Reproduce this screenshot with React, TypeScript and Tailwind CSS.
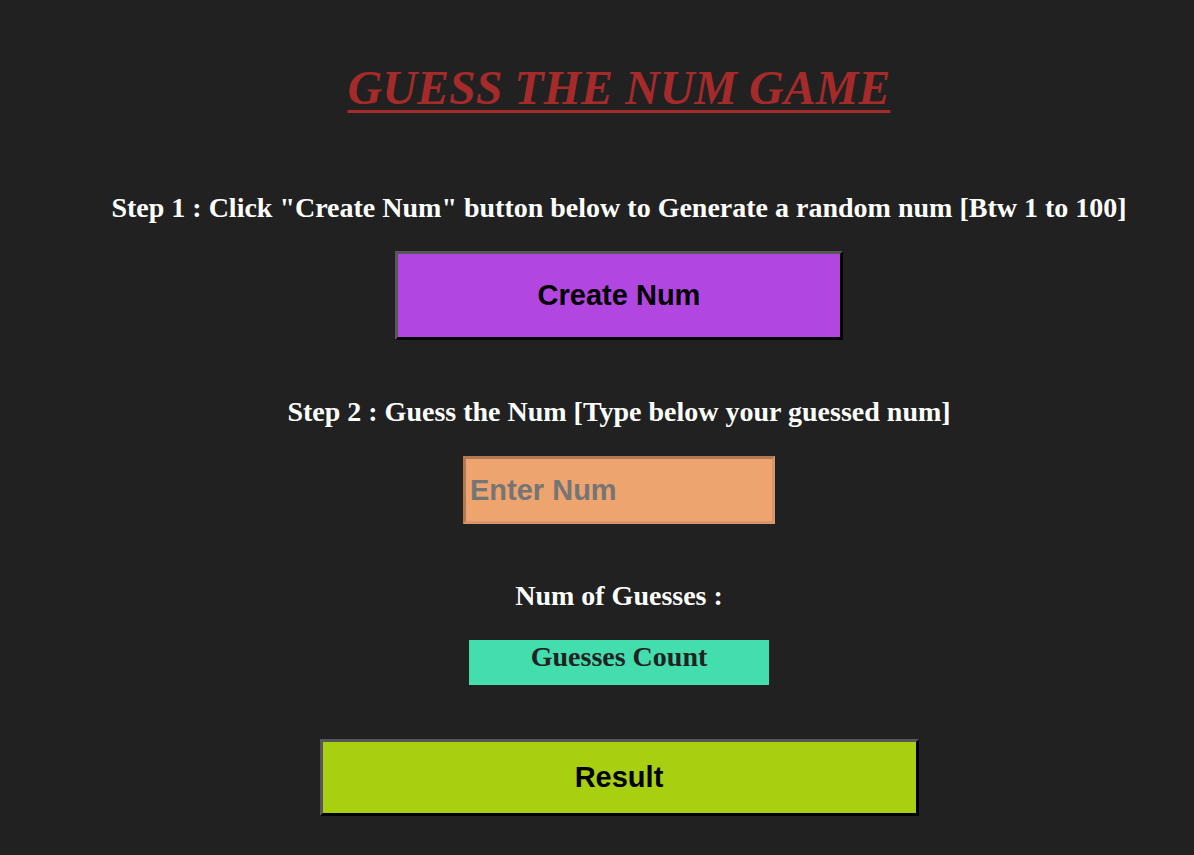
export default function App() {
  return (
    <div className="min-h-[855px] w-full bg-[#212121] pl-[44px] font-['Liberation_Serif',serif]">
      <div className="flex flex-col items-center">
        <h1 className="mt-[58px] text-[48px] leading-[60px] font-bold italic text-[#a52a2a] underline decoration-[3px] underline-offset-[6px]">
          GUESS THE NUM GAME
        </h1>
        <p className="mt-[74px] text-[28px] leading-[32px] font-bold text-white">
          Step 1 : Click "Create Num" button below to Generate a random num [Btw 1 to 100]
        </p>
        <button className="mt-[27px] h-[89px] w-[448px] border-[3px] border-t-[#575757] border-l-[#575757] border-b-black border-r-black bg-[#b146e0] font-['Liberation_Sans',sans-serif] text-[29px] font-bold text-black">
          Create Num
        </button>
        <p className="mt-[56px] text-[28px] leading-[32px] font-bold text-white">
          Step 2 : Guess the Num [Type below your guessed num]
        </p>
        <input
          placeholder="Enter Num"
          className="mt-[28px] h-[68px] w-[312px] border-[3px] border-t-[#b07a52] border-l-[#b07a52] border-b-[#d8966a] border-r-[#d8966a] bg-[#eea46e] px-[4px] font-['Liberation_Sans',sans-serif] text-[29px] font-bold text-black outline-none placeholder:text-[#757575]"
        />
        <p className="mt-[56px] text-[28px] leading-[32px] font-bold text-white">
          Num of Guesses :
        </p>
        <div className="mt-[28px] flex h-[45px] w-[300px] justify-center bg-[#43ddae] text-[28px] leading-[34px] font-bold text-[#222]">
          Guesses Count
        </div>
        <button className="mt-[54px] h-[77px] w-[599px] border-[3px] border-t-[#575757] border-l-[#575757] border-b-black border-r-black bg-[#a8d010] font-['Liberation_Sans',sans-serif] text-[29px] font-bold text-black">
          Result
        </button>
      </div>
    </div>
  );
}
